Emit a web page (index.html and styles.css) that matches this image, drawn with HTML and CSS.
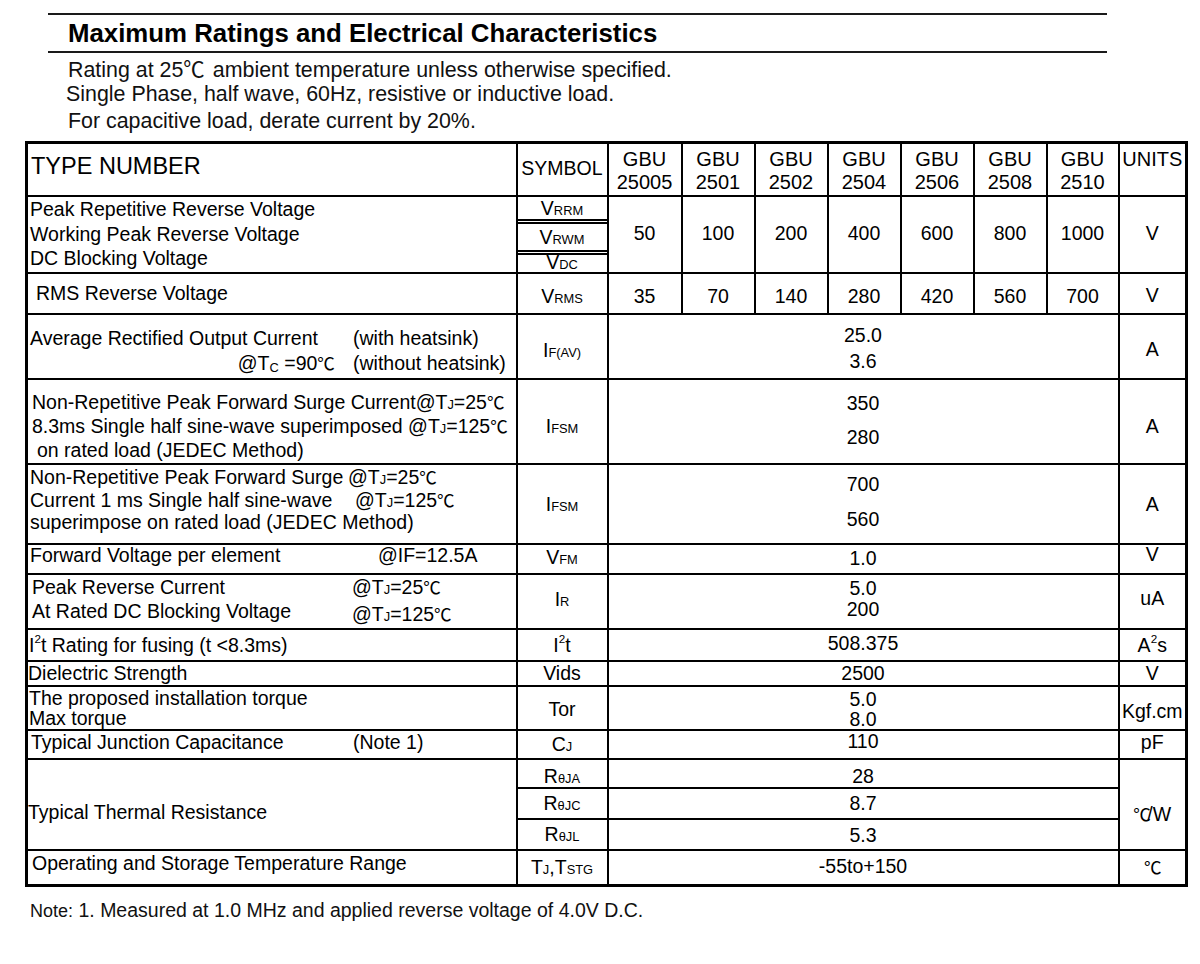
FILE: index.html
```html
<!DOCTYPE html>
<html lang="en">
<head>
<meta charset="utf-8">
<title>Maximum Ratings and Electrical Characteristics</title>
<link rel="stylesheet" href="styles.css">
</head>
<body>
<div class="page">
  <header class="heading">
    <h1 class="title">Maximum Ratings and Electrical Characteristics</h1>
  </header>
  <div class="intro">
    <p class="l1">Rating at 25<span class="deg">℃</span> ambient temperature unless otherwise specified.</p>
    <p class="l2">Single Phase, half wave, 60Hz, resistive or inductive load.</p>
    <p class="l3">For capacitive load, derate current by 20%.</p>
  </div>

  <table class="spec">
    <colgroup>
      <col class="c-param"><col class="c-sym">
      <col class="c-v1"><col class="c-v"><col class="c-v"><col class="c-v"><col class="c-v"><col class="c-v"><col class="c-v7">
      <col class="c-unit">
    </colgroup>
    <tr class="r-head">
      <th class="param type">TYPE NUMBER</th>
      <th class="sym symh">SYMBOL</th>
      <th class="gbu">GBU<br>25005</th>
      <th class="gbu">GBU<br>2501</th>
      <th class="gbu">GBU<br>2502</th>
      <th class="gbu">GBU<br>2504</th>
      <th class="gbu">GBU<br>2506</th>
      <th class="gbu">GBU<br>2508</th>
      <th class="gbu">GBU<br>2510</th>
      <th class="units">UNITS</th>
    </tr>

    <tr class="r-g1">
      <td class="param p-g1">Peak Repetitive Reverse Voltage<br>Working Peak Reverse Voltage<br>DC Blocking Voltage</td>
      <td class="sym sym-stack">
        <div class="stack-a">V<span class="sc">RRM</span></div>
        <div class="stack-b">V<span class="sc">RWM</span></div>
        <div class="stack-c">V<span class="sc">DC</span></div>
      </td>
      <td class="v">50</td>
      <td class="v">100</td>
      <td class="v">200</td>
      <td class="v">400</td>
      <td class="v">600</td>
      <td class="v">800</td>
      <td class="v">1000</td>
      <td class="u">V</td>
    </tr>

    <tr class="r-rms">
      <td class="param p-rms">RMS Reverse Voltage</td>
      <td class="sym">V<span class="sc">RMS</span></td>
      <td class="v">35</td>
      <td class="v">70</td>
      <td class="v">140</td>
      <td class="v">280</td>
      <td class="v">420</td>
      <td class="v">560</td>
      <td class="v">700</td>
      <td class="u">V</td>
    </tr>

    <tr class="r-ifav">
      <td class="param p-ifav">
        <div class="tagged t-ifav">
          <span>Average Rectified Output Current</span><span>(with heatsink)</span>
          <span class="right">@T<span class="sub">C</span> =90<span class="deg">℃</span></span><span>(without heatsink)</span>
        </div>
      </td>
      <td class="sym">I<span class="sc">F(AV)</span></td>
      <td class="vm" colspan="7">25.0<br>3.6</td>
      <td class="u">A</td>
    </tr>

    <tr class="r-ifsm1">
      <td class="param p-ifsm1">Non-Repetitive Peak Forward Surge Current@T<span class="sc">J</span>=25<span class="deg">℃</span><br>8.3ms Single half sine-wave superimposed @T<span class="sc">J</span>=125<span class="deg">℃</span><br><span class="indent">on rated load (JEDEC Method)</span></td>
      <td class="sym">I<span class="sc">FSM</span></td>
      <td class="vm" colspan="7">350<br>280</td>
      <td class="u">A</td>
    </tr>

    <tr class="r-ifsm2">
      <td class="param p-ifsm2">
        <div class="tagged t-ifsm2">
          <span>Non-Repetitive Peak Forward Surge</span><span>@T<span class="sc">J</span>=25<span class="deg">℃</span></span>
          <span>Current 1 ms Single half sine-wave</span><span class="shift">@T<span class="sc">J</span>=125<span class="deg">℃</span></span>
          <span class="span2">superimpose on rated load (JEDEC Method)</span>
        </div>
      </td>
      <td class="sym">I<span class="sc">FSM</span></td>
      <td class="vm" colspan="7">700<br>560</td>
      <td class="u">A</td>
    </tr>

    <tr class="r-vfm">
      <td class="param p-vfm">
        <div class="tagged t-vfm"><span>Forward Voltage per element</span><span>@IF=12.5A</span></div>
      </td>
      <td class="sym">V<span class="sc">FM</span></td>
      <td class="vm" colspan="7">1.0</td>
      <td class="u">V</td>
    </tr>

    <tr class="r-ir">
      <td class="param p-ir">
        <div class="tagged t-ir">
          <span>Peak Reverse Current</span><span>@T<span class="sc">J</span>=25<span class="deg">℃</span></span>
          <span>At Rated DC Blocking Voltage</span><span class="low">@T<span class="sc">J</span>=125<span class="deg">℃</span></span>
        </div>
      </td>
      <td class="sym">I<span class="sc">R</span></td>
      <td class="vm" colspan="7">5.0<br>200</td>
      <td class="u">uA</td>
    </tr>

    <tr class="r-i2t">
      <td class="param p-i2t">I<span class="sup">2</span>t Rating for fusing (t &lt;8.3ms)</td>
      <td class="sym">I<span class="sup">2</span>t</td>
      <td class="vm" colspan="7">508.375</td>
      <td class="u">A<span class="sup">2</span>s</td>
    </tr>

    <tr class="r-vids">
      <td class="param p-vids">Dielectric Strength</td>
      <td class="sym">Vids</td>
      <td class="vm" colspan="7">2500</td>
      <td class="u">V</td>
    </tr>

    <tr class="r-tor">
      <td class="param p-tor">The proposed installation torque<br>Max torque</td>
      <td class="sym">Tor</td>
      <td class="vm" colspan="7">5.0<br>8.0</td>
      <td class="u">Kgf.cm</td>
    </tr>

    <tr class="r-cj">
      <td class="param p-cj">
        <div class="tagged t-cj"><span>Typical Junction Capacitance</span><span>(Note 1)</span></div>
      </td>
      <td class="sym">C<span class="sc">J</span></td>
      <td class="vm" colspan="7">110</td>
      <td class="u">pF</td>
    </tr>

    <tr class="r-ra">
      <td class="param p-th" rowspan="3">Typical Thermal Resistance</td>
      <td class="sym">R<span class="sc">θJA</span></td>
      <td class="vm" colspan="7">28</td>
      <td class="u u-th" rowspan="3"><span class="deg">℃</span>/W</td>
    </tr>
    <tr class="r-rc">
      <td class="sym">R<span class="sc">θJC</span></td>
      <td class="vm" colspan="7">8.7</td>
    </tr>
    <tr class="r-rl">
      <td class="sym">R<span class="sc">θJL</span></td>
      <td class="vm" colspan="7">5.3</td>
    </tr>

    <tr class="r-temp">
      <td class="param p-temp">Operating and Storage Temperature Range</td>
      <td class="sym">T<span class="sc">J</span>,T<span class="sc">STG</span></td>
      <td class="vm" colspan="7">-55to+150</td>
      <td class="u"><span class="deg">℃</span></td>
    </tr>
  </table>

  <p class="note"><span class="note-lead">Note:</span> 1. Measured at 1.0 MHz and applied reverse voltage of 4.0V D.C.</p>
</div>
</body>
</html>
```

FILE: styles.css
```css
* { box-sizing: border-box; }

html, body {
  margin: 0;
  background: #fff;
}

body {
  width: 1200px;
  font-family: "Liberation Sans", Arial, sans-serif;
  color: #111;
}

.page {
  padding-top: 13px;
}

/* ---------- heading ---------- */
.heading {
  margin-left: 48px;
  width: 1059px;
  height: 40px;
  padding-left: 20px;
  border-top: 2px solid #1a1a1a;
  border-bottom: 2px solid #1a1a1a;
}

.title {
  margin: 0;
  font-size: 25.8px;
  font-weight: bold;
  line-height: 36px;
  color: #000;
}

/* ---------- intro ---------- */
.intro {
  padding-left: 68px;
  font-size: 21.4px;
}

.intro p {
  margin: 0;
  line-height: 25px;
}

.intro .l1 { margin-top: 5px; }
.intro .l2 { margin-top: -1px; margin-left: -2px; }
.intro .l3 { margin-top: 2px; }

.deg {
  font-family: "Noto Sans CJK SC", "DejaVu Sans", sans-serif;
  font-size: 0.9em;
  letter-spacing: -0.05em;
  font-weight: normal;
  line-height: 0;
}

.intro .deg {
  font-size: 1em;
  letter-spacing: 0.1em;
}

/* ---------- table ---------- */
.spec {
  margin: 7px 0 0 25px;
  width: 1160px;
  table-layout: fixed;
  border-collapse: collapse;
  border: 3px solid #000;
  font-size: 19.5px;
  color: #000;
}

.c-param { width: 490px; }
.c-sym { width: 91px; }
.c-v1 { width: 74px; }
.c-v { width: 73px; }
.c-v7 { width: 72px; }
.c-unit { width: 68px; }

.spec th,
.spec td {
  border: 2px solid #000;
  padding: 0;
  vertical-align: middle;
  line-height: 22px;
  font-weight: normal;
  white-space: nowrap;
}

.spec .param { text-align: left; padding-left: 2px; }
.spec .sym,
.spec .v,
.spec .vm,
.spec .u,
.spec .gbu,
.spec .units { text-align: center; }

.sc { font-size: 0.66em; line-height: 0; }
.sub { font-size: 0.66em; position: relative; top: 2px; line-height: 0; }
.sup { font-size: 0.6em; vertical-align: 0.75em; line-height: 0; }

/* header */
.r-head { height: 53px; }
.spec .r-head .type { font-size: 23.5px; padding-left: 3px; padding-bottom: 7px; }
.spec .r-head .symh { font-size: 19.5px; padding-bottom: 3px; }
.spec .r-head .gbu { font-size: 20px; line-height: 23px; padding-top: 4px; }
.spec .r-head .units { font-size: 20px; vertical-align: top; padding-top: 4px; }

/* group 1 */
.r-g1 { height: 77px; }
.spec .p-g1 { line-height: 24.5px; }
.spec .sym-stack { vertical-align: top; }
.stack-a { height: 24px; line-height: 22px; border-bottom: 2px solid #000; }
.stack-b { height: 30px; line-height: 26px; margin-top: 1px; border-top: 2px solid #000; border-bottom: 2px solid #000; }
.stack-c { height: 16px; line-height: 15px; margin-top: 1px; border-top: 2px solid #000; }
.spec .r-g1 .v,
.spec .r-g1 .u { padding-bottom: 2px; }

/* rms */
.r-rms { height: 41px; }
.spec .p-rms { padding-left: 8px; }
.spec .r-rms .sym,
.spec .r-rms .v { padding-top: 6px; }
.spec .r-rms .u { padding-top: 3px; }

/* tagged grids */
.tagged { display: grid; }
.tagged .right { text-align: right; padding-right: 19px; }
.tagged .span2 { grid-column: 1 / span 2; }

/* if(av) */
.r-ifav { height: 65px; }
.t-ifav { grid-template-columns: 323px auto; line-height: 25px; padding-top: 10px; }
.spec .r-ifav .sym { padding-top: 7px; }
.spec .r-ifav .vm { line-height: 26px; padding-top: 4px; }
.spec .r-ifav .u { padding-top: 5px; }

/* ifsm 1 */
.r-ifsm1 { height: 85px; }
.spec .p-ifsm1 { padding-left: 4px; line-height: 24px; padding-top: 10px; }
.indent { padding-left: 5px; }
.spec .r-ifsm1 .sym { padding-top: 9px; }
.spec .r-ifsm1 .vm { line-height: 34px; padding-bottom: 2px; }
.spec .r-ifsm1 .u { padding-top: 9px; }

/* ifsm 2 */
.r-ifsm2 { height: 80px; }
.spec .p-ifsm2 { padding-left: 2px; }
.t-ifsm2 { grid-template-columns: 318px auto; line-height: 22.5px; padding-bottom: 7px; }
.t-ifsm2 .shift { padding-left: 7px; }
.spec .r-ifsm2 .vm { line-height: 35px; padding-bottom: 3px; }

/* vfm */
.r-vfm { height: 30px; }
.t-vfm { grid-template-columns: 348px auto; line-height: 18px; padding-bottom: 7px; }
.spec .r-vfm .sym { line-height: 18px; padding-bottom: 3px; }
.spec .r-vfm .vm { line-height: 18px; padding-bottom: 2px; }
.spec .r-vfm .u { line-height: 14px; padding-bottom: 9px; }

/* ir */
.r-ir { height: 55px; }
.spec .p-ir { padding-left: 4px; }
.t-ir { grid-template-columns: 320px auto; line-height: 24px; padding-bottom: 4px; }
.t-ir .low { position: relative; top: 3px; }
.spec .r-ir .sym { padding-bottom: 5px; }
.spec .r-ir .vm { line-height: 21px; padding-bottom: 4px; }
.spec .r-ir .u { padding-bottom: 7px; }

/* i2t / vids */
.r-i2t { height: 32px; }
.spec .p-i2t { padding-left: 1px; }
.spec .r-i2t .vm { padding-bottom: 3px; }
.r-vids { height: 25px; }
.spec .p-vids { padding-left: 0; }
.spec .r-vids td { line-height: 20px; }

/* tor */
.r-tor { height: 44px; }
.spec .p-tor { padding-left: 1px; line-height: 20px; }
.spec .r-tor .sym { padding-top: 3px; }
.spec .r-tor .vm { line-height: 20px; padding-top: 2px; }
.spec .r-tor .u { padding-top: 6px; }

/* cj */
.r-cj { height: 29px; }
.spec .p-cj { padding-left: 3px; }
.t-cj { grid-template-columns: 322px auto; padding-bottom: 5px; }
.spec .r-cj td { line-height: 18px; }
.spec .r-cj .vm { line-height: 16px; padding-bottom: 6px; }
.spec .r-cj .u { padding-bottom: 5px; }

/* thermal */
.r-ra { height: 29px; }
.r-rc { height: 31px; }
.r-rl { height: 31px; }
.spec .p-th { padding-top: 15px; padding-left: 0; }
.spec .r-ra .sym,
.spec .r-ra .vm { padding-top: 5px; }
.spec .r-rl .vm { padding-top: 2px; }
.spec .u-th { padding-top: 19px; }
.u-th .deg { letter-spacing: -0.2em; }

/* temp */
.r-temp { height: 36px; }
.spec .p-temp { padding-left: 4px; padding-bottom: 9px; }
.spec .r-temp .vm { padding-bottom: 2px; }

/* note */
.note {
  margin: 11px 0 0 30px;
  font-size: 19.5px;
  line-height: 24px;
}

.note-lead { font-size: 18px; }
```
